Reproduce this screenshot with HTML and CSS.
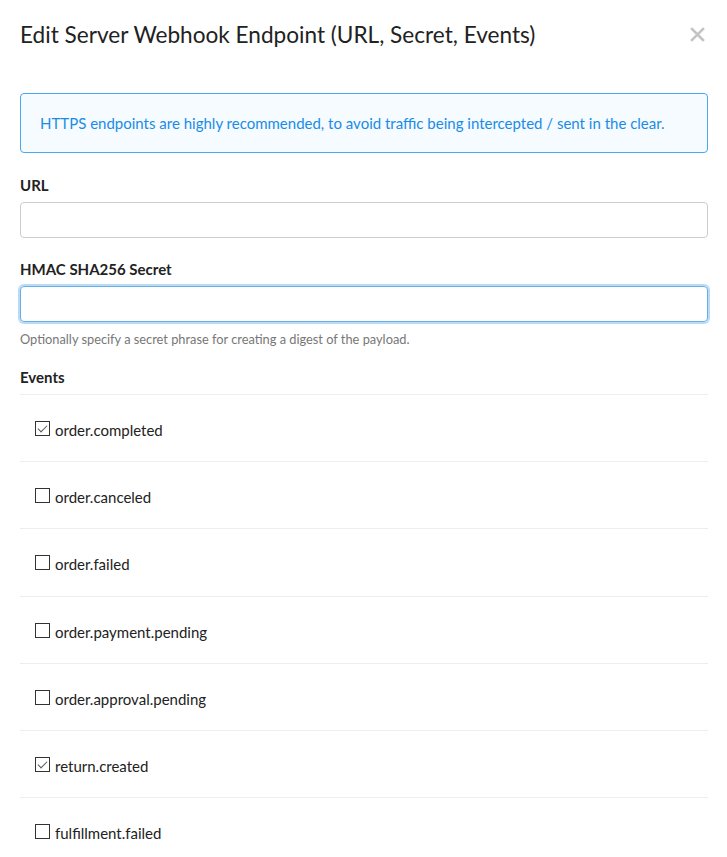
FILE: index.html
```html
<!DOCTYPE html>
<html>
<head>
<meta charset="utf-8">
<link rel="stylesheet" href="styles.css">
</head>
<body>
<div class="modal">
  <div class="modal-header">
    <h2 class="modal-title">Edit Server Webhook Endpoint (URL, Secret, Events)</h2>
    <span class="close">
      <svg width="15" height="15" viewBox="0 0 15 15"><path d="M2 2L13 13M13 2L2 13" stroke="#c4c4c4" stroke-width="2.6" stroke-linecap="square"/></svg>
    </span>
  </div>
  <div class="alert">HTTPS endpoints are highly recommended, to avoid traffic being intercepted / sent in the clear.</div>
  <div class="field">
    <label class="label">URL</label>
    <div class="input"></div>
  </div>
  <div class="field">
    <label class="label">HMAC SHA256 Secret</label>
    <div class="input focused"></div>
    <p class="help">Optionally specify a secret phrase for creating a digest of the payload.</p>
  </div>
  <div class="label events-label">Events</div>
  <ul class="events">
    <li class="event"><span class="cb checked"></span><span class="ev-name">order.completed</span></li>
    <li class="event"><span class="cb"></span><span class="ev-name">order.canceled</span></li>
    <li class="event"><span class="cb"></span><span class="ev-name">order.failed</span></li>
    <li class="event"><span class="cb"></span><span class="ev-name">order.payment.pending</span></li>
    <li class="event"><span class="cb"></span><span class="ev-name">order.approval.pending</span></li>
    <li class="event"><span class="cb checked"></span><span class="ev-name">return.created</span></li>
    <li class="event"><span class="cb"></span><span class="ev-name">fulfillment.failed</span></li>
  </ul>
</div>
</body>
</html>
```
FILE: styles.css
```css
html, body {
  margin: 0;
  padding: 0;
  background: #fff;
}
body {
  font-family: Lato, "Open Sans", sans-serif;
  color: #222;
  overflow: hidden;
}
.modal {
  padding: 0 19px 0 20px;
}
.modal-header {
  display: flex;
  align-items: center;
  justify-content: space-between;
  height: 69px;
}
.modal-title {
  margin: 0;
  font-size: 22.6px;
  font-weight: 400;
  color: #222;
}
.close {
  display: flex;
  margin-right: 3px;
}
.alert {
  margin-top: 24px;
  height: 60px;
  box-sizing: border-box;
  border: 1px solid #4aa8ee;
  border-radius: 4px;
  background: #f5fbff;
  color: #1a8ce6;
  font-size: 15px;
  display: flex;
  align-items: center;
  padding: 0 19px;
}
.field {
  margin-top: 23px;
}
.field + .field {
  margin-top: 22px;
}
.label {
  display: block;
  font-size: 15px;
  font-weight: 700;
  color: #222;
  line-height: 18px;
}
.input {
  margin-top: 8px;
  height: 36px;
  box-sizing: border-box;
  border: 1px solid #ccc;
  border-radius: 4px;
}
.input.focused {
  border-color: #66afe9;
  box-shadow: 0 0 0 2px rgba(102, 175, 233, 0.45);
}
.help {
  margin: 9px 0 0;
  font-size: 12.8px;
  line-height: 16px;
  color: #777;
}
.events-label {
  margin-top: 21px;
}
.events {
  list-style: none;
  margin: 8px 0 0;
  padding: 0;
  border-top: 1px solid #eee;
}
.event {
  display: flex;
  align-items: center;
  height: 66.2px;
  border-bottom: 1px solid #eee;
  padding-left: 15px;
  font-size: 15px;
  color: #222;
}
.cb {
  width: 13px;
  height: 13px;
  border: 1px solid #333;
  margin-right: 5px;
  margin-top: 1px;
  position: relative;
  flex: none;
}
.cb.checked::after {
  content: "";
  position: absolute;
  width: 8px;
  height: 4px;
  border-left: 1.3px solid #555;
  border-bottom: 1.3px solid #555;
  transform: rotate(-45deg);
  top: 3px;
  left: 2px;
}
.ev-name {
  margin-top: 4px;
}
```
